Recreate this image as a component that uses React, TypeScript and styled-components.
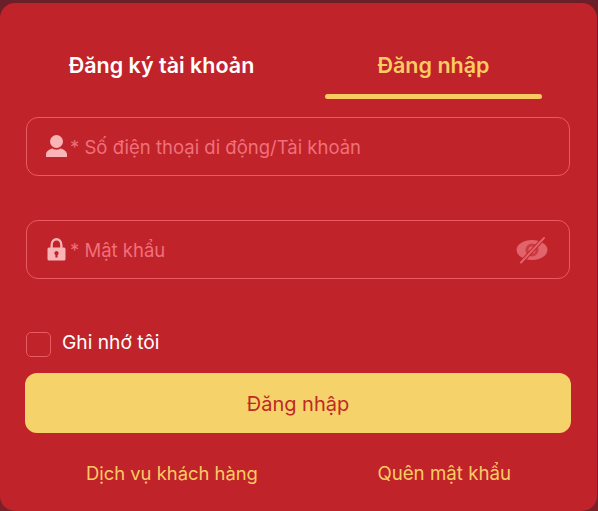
import React from "react";
import styled, { createGlobalStyle } from "styled-components";

const Global = createGlobalStyle`
  html, body { margin: 0; padding: 0; background: #6f1f26; }
  body { font-family: Inter, "Noto Sans", "Liberation Sans", sans-serif; -webkit-font-smoothing: antialiased; }
  * { box-sizing: border-box; }
`;

const Page = styled.div`
  width: 598px;
  height: 511px;
  padding-top: 3px;
  overflow: hidden;
  background: linear-gradient(#6b1f28, #7a2127);
`;

const Card = styled.div`
  width: 597px;
  height: 508px;
  background: #c1232a;
  border-radius: 15px;
  padding: 0 27px 0 26px;
  display: flex;
  flex-direction: column;
`;

const Tabs = styled.div`
  display: flex;
  justify-content: space-between;
  padding: 0 28px 0 27px;
  height: 96px;
`;

const Tab = styled.div<{ $active?: boolean }>`
  width: 217px;
  height: 96px;
  display: flex;
  flex-direction: column;
  align-items: stretch;
  text-align: center;
  font-size: 21.5px;
  font-weight: 600;
  color: ${(p) => (p.$active ? "#fbcb63" : "#ffffff")};
`;

const TabLabel = styled.span`
  height: 30px;
  margin-top: 47px;
  line-height: 30px;
  white-space: nowrap;
`;

const TabBar = styled.span`
  height: 5px;
  margin-top: 14px;
  border-radius: 3px;
  background: #fbcb63;
`;

const Field = styled.div<{ $gap: number }>`
  height: 59px;
  margin-top: ${(p) => p.$gap}px;
  border: 1px solid #ea5a61;
  border-radius: 12px;
  display: flex;
  align-items: center;
  padding: 0 21px 0 18px;
  color: #f0707a;
  font-size: 18.5px;
`;

const LeadIcon = styled.svg`
  width: 23px;
  height: 24px;
  flex: none;
  fill: #f9b5b5;
  margin-right: 2px;
  margin-top: -2px;
`;

const Placeholder = styled.span`
  flex: 1;
  white-space: nowrap;
`;

const EyeIcon = styled.svg`
  width: 32px;
  height: 28px;
  flex: none;
`;

const Remember = styled.label`
  display: flex;
  align-items: center;
  gap: 11px;
  margin-top: 52px;
  height: 26px;
  color: #fff;
  font-size: 19.2px;
  line-height: 24px;
`;

const RememberText = styled.span`
  margin-top: -5px;
`;

const Check = styled.span`
  width: 25px;
  height: 25px;
  border: 1px solid #ea5a61;
  border-radius: 5px;
`;

const Submit = styled.button`
  display: block;
  width: 546px;
  height: 60px;
  margin: 16px 0 0 -1px;
  padding: 2px 0 0;
  background: #f6d26a;
  color: #bd2a25;
  border: 0;
  border-radius: 12px;
  font-family: inherit;
  font-size: 20px;
  font-weight: 400;
`;

const Footer = styled.div`
  display: flex;
  align-items: baseline;
  margin-top: 26px;
  padding: 0 59px 0 60px;
  justify-content: space-between;
  color: #fbcb63;
  font-size: 18.4px;
  line-height: 28px;
`;

const ForgotLink = styled.span`
  font-size: 18.7px;
`;

export default function App() {
  return (
    <>
      <Global />
      <Page>
        <Card>
          <Tabs>
            <Tab>
              <TabLabel>Đăng ký tài khoản</TabLabel>
            </Tab>
            <Tab $active>
              <TabLabel>Đăng nhập</TabLabel>
              <TabBar />
            </Tab>
          </Tabs>
          <Field $gap={18}>
            <LeadIcon viewBox="0 0 23 24">
              <circle cx="11.500" cy="7.500" r="6.500" />
              <path d="M1 23v-2.500c0-3.500 3.800-5.500 6.500-6 2.200 1.600 5.800 1.600 8 0 2.700.5 6.500 2.500 6.500 6V23z" />
            </LeadIcon>
            <Placeholder>* Số điện thoại di động/Tài khoản</Placeholder>
          </Field>
          <Field $gap={44}>
            <LeadIcon viewBox="0 0 23 24">
              <path fillRule="evenodd" d="M4 10.500h1.500V8a6 7 0 0 1 12 0v2.500H19a1.500 1.500 0 0 1 1.500 1.500v10a1.500 1.500 0 0 1-1.500 1.500H4A1.500 1.500 0 0 1 2.500 22V12A1.500 1.500 0 0 1 4 10.500zm3.800 0h7.400V8a3.700 4.500 0 0 0-7.400 0zM11.500 14a2.100 2.100 0 0 0-1.100 3.900V20.500h2.200v-2.600A2.100 2.100 0 0 0 11.500 14z" />
            </LeadIcon>
            <Placeholder>* Mật khẩu</Placeholder>
            <EyeIcon viewBox="0 0 32 28">
              <ellipse cx="16" cy="14" rx="15.500" ry="10" fill="#e2646b" />
              <circle cx="16" cy="14" r="6.500" fill="#cc3a42" />
              <circle cx="16" cy="14" r="3.500" fill="#e2646b" />
              <path d="M5 26.500 28 2" stroke="#c1232a" strokeWidth="4" />
              <path d="M5 26.500 28 2" stroke="#e2646b" strokeWidth="2" strokeLinecap="round" />
            </EyeIcon>
          </Field>
          <Remember>
            <Check />
            <RememberText>Ghi nhớ tôi</RememberText>
          </Remember>
          <Submit>Đăng nhập</Submit>
          <Footer>
            <span>Dịch vụ khách hàng</span>
            <ForgotLink>Quên mật khẩu</ForgotLink>
          </Footer>
        </Card>
      </Page>
    </>
  );
}
